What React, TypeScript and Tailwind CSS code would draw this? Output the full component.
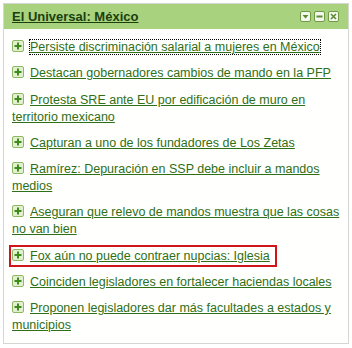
import React from 'react'

const items = [
  'Persiste discriminación salarial a mujeres en México',
  'Destacan gobernadores cambios de mando en la PFP',
  'Protesta SRE ante EU por edificación de muro en territorio mexicano',
  'Capturan a uno de los fundadores de Los Zetas',
  'Ramírez: Depuración en SSP debe incluir a mandos medios',
  'Aseguran que relevo de mandos muestra que las cosas no van bien',
  'Fox aún no puede contraer nupcias: Iglesia',
  'Coinciden legisladores en fortalecer haciendas locales',
  'Proponen legisladores dar más facultades a estados y municipios',
]

function PlusIcon() {
  return (
    <svg width="12" height="12" viewBox="0 0 12 12" className="mr-[6px] inline-block align-[-1px]">
      <rect x="0.5" y="0.5" width="11" height="11" rx="1.5" fill="#e3f0cf" stroke="#8cb864" />
      <path d="M6 2.5v7M2.5 6h7" stroke="#3f8a1f" strokeWidth="2" />
    </svg>
  )
}

function HeadButton({ kind }: { kind: 'down' | 'min' | 'close' }) {
  return (
    <svg width="11" height="11" viewBox="0 0 11 11">
      <rect x="0.5" y="0.5" width="10" height="10" rx="1.5" fill="#f4f8ec" stroke="#6f9a45" />
      {kind === 'down' && <path d="M2.5 4h6L5.5 7.5z" fill="#5d8a36" />}
      {kind === 'min' && <path d="M2.5 5.5h6" stroke="#5d8a36" strokeWidth="2" />}
      {kind === 'close' && <path d="M3 3l5 5M8 3l-5 5" stroke="#5d8a36" strokeWidth="1.6" />}
    </svg>
  )
}

export default function App() {
  return (
    <div className="h-[348px] w-[352px] bg-white p-[3px] font-['Liberation_Sans',Arial,sans-serif]">
      <div className="flex h-[341px] flex-col border border-[#d6d6d0] bg-[#fffffd]">
        <div className="flex h-[25px] items-center justify-between bg-[#a9d27f] pl-[8px] pr-[9px]">
          <span className="text-[13px] font-bold text-[#1a400c] underline">El Universal: México</span>
          <div className="flex gap-[3px]">
            <HeadButton kind="down" />
            <HeadButton kind="min" />
            <HeadButton kind="close" />
          </div>
        </div>
        <ul className="flex flex-col gap-[9.25px] pl-[8px] pr-[4px] pt-[10px]">
          {items.map((t, i) => (
            <li key={i} className="text-[12.5px] leading-[17px] text-[#2f6f17]">
              <span
                className={i === 6 ? 'ml-[-3px] border-2 border-[#d0141c] py-[2px] pl-[1px] pr-[5px]' : ''}
              >
                <PlusIcon />
                <a href="#" className={i === 0 ? 'underline outline-1 outline-dotted outline-black' : 'underline'}>
                  {t}
                </a>
              </span>
            </li>
          ))}
        </ul>
      </div>
    </div>
  )
}
